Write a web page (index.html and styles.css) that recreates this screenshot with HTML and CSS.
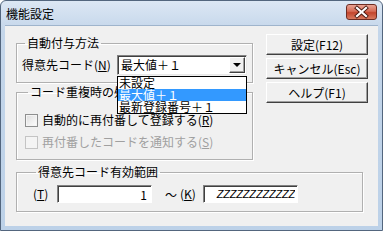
FILE: index.html
```html
<!DOCTYPE html>
<html lang="ja">
<head>
  <meta charset="UTF-8">
  <title>機能設定</title>
  <link rel="stylesheet" href="styles.css">
</head>
<body>
  <div class="window">
    <div class="titlebar">
      <span class="title">機能設定</span>
      <span class="close">
        <svg width="31" height="16" viewBox="0 0 31 16">
          <path d="M11 4 L20 12 M20 4 L11 12" stroke="#4a1a12" stroke-width="4" stroke-linecap="square"/>
          <path d="M11 4 L20 12 M20 4 L11 12" stroke="#fff" stroke-width="2.2" stroke-linecap="square"/>
        </svg>
      </span>
    </div>

    <div class="client">
      <div class="top">
        <div class="left-col">
          <fieldset class="group g-auto">
            <legend>自動付与方法</legend>
            <div class="row">
              <span class="label">得意先コード(<u>N</u>)</span>
              <div class="combo-wrap">
                <div class="combo">
                  <span class="combo-text">最大値＋１</span>
                  <span class="combo-btn"><span class="arrow"></span></span>
                </div>
                <ul class="dropdown">
                  <li>未設定</li>
                  <li class="hl">最大値＋１</li>
                  <li>最新登録番号＋１</li>
                </ul>
              </div>
            </div>
          </fieldset>

          <fieldset class="group g-dup">
            <legend>コード重複時の処理</legend>
            <div class="check-row">
              <span class="check"></span>
              <span>自動的に再付番して登録する(<u>R</u>)</span>
            </div>
            <div class="check-row disabled">
              <span class="check"></span>
              <span>再付番したコードを通知する(<u>S</u>)</span>
            </div>
          </fieldset>
        </div>

        <div class="buttons">
          <button class="btn">設定(F12)</button>
          <button class="btn">キャンセル(Esc)</button>
          <button class="btn">ヘルプ(F1)</button>
        </div>
      </div>

      <fieldset class="group g-range">
        <legend>得意先コード有効範囲</legend>
        <div class="range-row">
          <span class="key">(<u>T</u>)</span>
          <input class="field" type="text" value="1">
          <span class="tilde">～</span>
          <span class="key">(<u>K</u>)</span>
          <input class="field zz" type="text" value="ZZZZZZZZZZZZ">
        </div>
      </fieldset>
    </div>
  </div>
</body>
</html>
```

FILE: styles.css
```css
body {
  margin: 0;
  font-family: "Noto Sans CJK JP", "Liberation Sans", sans-serif;
  font-size: 12px;
  color: #000;
}
.window {
  box-sizing: border-box;
  width: 383px;
  height: 231px;
  border: 1px solid #53667e;
  border-radius: 6px 6px 0 0;
  background: linear-gradient(#dce7f4, #c4d6ea 30px, #bcd1e8);
  padding: 0 4px 4px 4px;
  display: flex;
  flex-direction: column;
}
.titlebar {
  height: 24px;
  display: flex;
  align-items: flex-start;
  justify-content: space-between;
}
.title {
  margin: 5px 0 0 1px;
  line-height: 16px;
  font-size: 12px;
  color: #000;
}
.close {
  width: 31px;
  height: 16px;
  margin: 3px 1px 0 0;
  border: 1px solid #6e2c22;
  border-radius: 3px;
  box-sizing: border-box;
  background: linear-gradient(#e9a394, #d66b55 45%, #c3452d 55%, #d87a5f);
  display: flex;
  align-items: center;
  justify-content: center;
  overflow: hidden;
}
.close svg {
  flex: none;
}
.client {
  width: 373px;
  height: 201px;
  box-sizing: border-box;
  background: #f0f0f0;
  border-top: 1px solid #9fb4cc;
  padding: 8px 0 0 11px;
}
.top {
  display: flex;
}
.left-col {
  width: 237px;
  margin-top: 2px;
}
.group {
  margin: 0;
  padding: 0;
  border: 1px solid #b0b0b0;
  box-shadow: inset 1px 1px 0 #fff, 1px 1px 0 #fff;
}
.group legend {
  margin-left: 3px;
  padding: 0 2px;
  line-height: 14px;
}
.g-auto {
  padding: 5px 0 7px 5px;
}
.g-dup {
  margin-top: 2px;
  padding: 10px 0 6px 8px;
}
.g-range {
  width: 347px;
  box-sizing: border-box;
  margin-top: 5px;
  padding: 6px 0 8px 16px;
}
.row {
  display: flex;
  align-items: center;
}
.label {
  width: 95px;
  line-height: 14px;
}
.combo-wrap {
  position: relative;
}
.combo {
  width: 130px;
  height: 20px;
  box-sizing: border-box;
  background: #fff;
  border: 1px solid;
  border-color: #828282 #e8e8e8 #e8e8e8 #828282;
  box-shadow: inset 1px 1px 0 #404040;
  display: flex;
  align-items: center;
  justify-content: space-between;
}
.combo-text {
  padding-left: 3px;
  line-height: 14px;
}
.combo-btn {
  width: 16px;
  height: 16px;
  margin-right: 1px;
  box-sizing: border-box;
  background: #f0f0f0;
  border: 1px solid;
  border-color: #fff #404040 #404040 #fff;
  box-shadow: inset -1px -1px 0 #a0a0a0;
  display: flex;
  align-items: center;
  justify-content: center;
}
.arrow {
  width: 0;
  height: 0;
  border-left: 4px solid transparent;
  border-right: 4px solid transparent;
  border-top: 4px solid #000;
}
.dropdown {
  position: absolute;
  top: 21px;
  left: 0;
  z-index: 2;
  width: 130px;
  box-sizing: border-box;
  margin: 0;
  padding: 0;
  list-style: none;
  background: #fff;
  border: 1px solid #000;
}
.dropdown li {
  height: 12px;
  line-height: 12px;
  padding-left: 1px;
  font-size: 12px;
}
.dropdown li.hl {
  background: #3399ff;
  color: #fff;
}
.check-row {
  height: 22px;
  display: flex;
  align-items: center;
  gap: 4px;
  line-height: 14px;
}
.check {
  width: 13px;
  height: 13px;
  box-sizing: border-box;
  border: 1px solid #8e8f8f;
  background: linear-gradient(135deg, #dcdcdc, #fff);
  box-shadow: inset 0 0 0 1px #f4f4f4;
}
.check-row.disabled {
  color: #a0a0a0;
}
.check-row.disabled .check {
  border-color: #c4c4c4;
  background: #f4f4f4;
}
.buttons {
  margin-left: 13px;
  display: flex;
  flex-direction: column;
  gap: 3px;
}
.btn {
  width: 102px;
  height: 21px;
  padding: 0;
  font-family: inherit;
  font-size: 12px;
  line-height: 14px;
  color: #000;
  background: #f0f0f0;
  border: 1px solid;
  border-color: #fff #404040 #404040 #fff;
  box-shadow: inset -1px -1px 0 #a0a0a0;
}
.range-row {
  display: flex;
  align-items: center;
}
.key {
  width: 20px;
  margin-right: 4px;
  line-height: 14px;
}
.field {
  width: 95px;
  height: 18px;
  box-sizing: border-box;
  margin: 0;
  padding: 0 4px 0 0;
  text-align: right;
  font-family: inherit;
  font-size: 12px;
  background: #fff;
  border: 1px solid;
  border-color: #828282 #fff #fff #828282;
  box-shadow: inset 1px 1px 0 #404040;
  outline: none;
}
.field.zz {
  padding-right: 2px;
  font-family: "Liberation Sans", sans-serif;
  font-size: 11px;
  font-style: italic;
  letter-spacing: -0.2px;
}
.tilde {
  margin-left: 13px;
  width: 12px;
  margin-right: 3px;
}
.key + .field.zz {
  margin-left: -1px;
}
```
